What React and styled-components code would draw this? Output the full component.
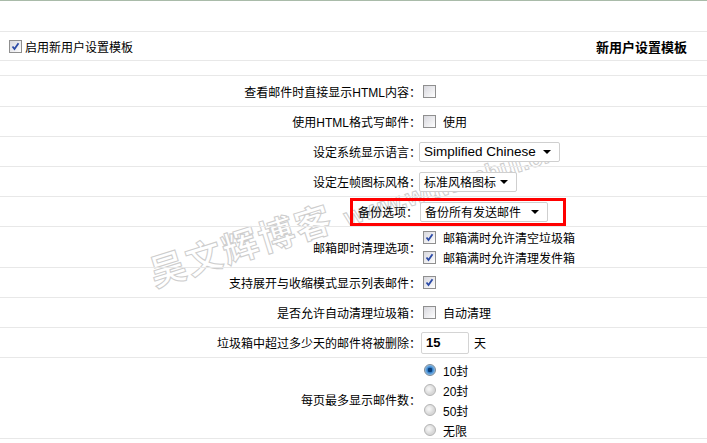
import React from "react";
import styled, { createGlobalStyle } from "styled-components";

const Global = createGlobalStyle`
  html, body { margin: 0; padding: 0; background: #fff; }
  body { font-family: "Liberation Sans", "Noto Sans CJK SC", sans-serif; font-size: 12px; color: #000; }
`;

const Page = styled.div`
  position: relative;
  width: 707px;
  height: 443px;
  overflow: hidden;
  border-top: 1px solid #a9bba9;
  box-sizing: border-box;
`;

const Form = styled.div`
  position: relative;
  z-index: 1;
  display: flex;
  flex-direction: column;
`;

const Blank = styled.div`
  height: ${(p) => p.$h}px;
  border-bottom: 1px solid #e8e8e8;
`;

const Header = styled.div`
  height: 28px;
  border-bottom: 1px solid #e8e8e8;
  display: flex;
  align-items: center;
  justify-content: space-between;
  padding: 0 20px 0 9px;
`;

const HeaderLeft = styled.label`
  display: flex;
  align-items: center;
  gap: 3px;
`;

const Title = styled.div`
  font-weight: bold;
  font-size: 13px;
`;

const Row = styled.div`
  height: ${(p) => p.$h || 29}px;
  border-bottom: 1px solid #e8e8e8;
  display: grid;
  grid-template-columns: 421px 1fr;
  align-items: center;
`;

const Label = styled.div`
  text-align: right;
  white-space: nowrap;
`;

const Value = styled.div`
  display: flex;
  flex-direction: ${(p) => (p.$col ? "column" : "row")};
  align-items: ${(p) => (p.$col ? "flex-start" : "center")};
  gap: ${(p) => p.$gap ?? 7}px;
  margin-left: ${(p) => p.$ml ?? 2}px;
  padding-top: ${(p) => p.$pt ?? 0}px;
`;

const Option = styled.div`
  display: flex;
  align-items: center;
  gap: 7px;
  height: 20px;
`;

const Box = styled.span`
  display: inline-flex;
  align-items: center;
  justify-content: center;
  width: 13px;
  height: 13px;
  box-sizing: border-box;
  border: 1px solid #8f8f8f;
  background: linear-gradient(135deg, #d8d8de 0%, #f2f2f4 70%, #ffffff 100%);
  flex: none;
`;

const Check = ({ checked }) => (
  <Box>
    {checked && (
      <svg width="9" height="9" viewBox="0 0 9 9">
        <path d="M1.5 4.5 L3.5 7 L7.5 1.2" fill="none" stroke="#2b4aa6" strokeWidth="1.8" />
      </svg>
    )}
  </Box>
);

const Radio = styled.span`
  width: 12px;
  height: 12px;
  border-radius: 50%;
  box-sizing: border-box;
  flex: none;
  border: 1px solid ${(p) => (p.$on ? "#7e8a96" : "#b4b4b4")};
  background: ${(p) =>
    p.$on
      ? "radial-gradient(circle at 50% 50%, #0b3e78 0 2px, #2f7cc8 2.5px, #8fc0ea 5px)"
      : "radial-gradient(circle at 40% 40%, #f4f4f4 0 1px, #d8d8d8 5px)"};
`;

const Select = styled.div`
  width: ${(p) => p.$w}px;
  height: 20px;
  box-sizing: border-box;
  border: 1px solid #cfcfcf;
  border-radius: 2px;
  background: #fff;
  display: flex;
  align-items: center;
  justify-content: space-between;
  padding: 0 8px 0 4px;
  font-size: ${(p) => p.$fs || 12}px;
  white-space: nowrap;
`;

const Arrow = styled.span`
  width: 0;
  height: 0;
  border-left: 4px solid transparent;
  border-right: 4px solid transparent;
  border-top: 4px solid #000;
`;

const Highlight = styled.div`
  display: flex;
  align-items: center;
  height: 28px;
  box-sizing: border-box;
  border: 3px solid #ff0000;
  margin-left: -71px;
  padding-left: 5px;
  width: 216px;
`;

const Input = styled.div`
  width: 48px;
  height: 22px;
  box-sizing: border-box;
  border: 1px solid #d4d4d4;
  border-radius: 2px;
  background: #fff;
  font-size: 13px;
  font-weight: bold;
  display: flex;
  align-items: center;
  padding-left: 4px;
`;

const Watermark = styled.div`
  position: absolute;
  z-index: 0;
  left: 142px;
  top: 246px;
  transform: rotate(-17.5deg);
  transform-origin: left top;
  white-space: nowrap;
  color: #fff;
  -webkit-text-stroke: 1px #cdcdcd;
  font-family: "Noto Sans CJK SC", sans-serif;
  font-weight: bold;
  font-size: 36px;
  letter-spacing: 2px;
`;

const Latin = styled.span`
  font-family: "Liberation Sans", sans-serif;
  font-weight: bold;
  font-size: 25px;
  letter-spacing: 0;
  margin-left: 12px;
`;

export default function App() {
  return (
    <>
      <Global />
      <Page>
        <Watermark>
          吴文辉博客<Latin>www.wuwenhui.cn</Latin>
        </Watermark>
        <Form>
          <Blank $h={30} />
          <Header>
            <HeaderLeft>
              <Check checked />
              启用新用户设置模板
            </HeaderLeft>
            <Title>新用户设置模板</Title>
          </Header>
          <Blank $h={14} />
          <Row $h={30}>
            <Label>查看邮件时直接显示HTML内容：</Label>
            <Value>
              <Check />
            </Value>
          </Row>
          <Row>
            <Label>使用HTML格式写邮件：</Label>
            <Value>
              <Check />
              使用
            </Value>
          </Row>
          <Row>
            <Label>设定系统显示语言：</Label>
            <Value $ml={-2}>
              <Select $w={141} $fs={13.5}>
                Simplified Chinese
                <Arrow />
              </Select>
            </Value>
          </Row>
          <Row>
            <Label>设定左帧图标风格：</Label>
            <Value $ml={-2}>
              <Select $w={98}>
                标准风格图标
                <Arrow />
              </Select>
            </Value>
          </Row>
          <Row>
            <Label />
            <Value $ml={0}>
              <Highlight>
                备份选项：
                <Select $w={128} style={{ marginLeft: 2 }}>
                  备份所有发送邮件
                  <Arrow />
                </Select>
              </Highlight>
            </Value>
          </Row>
          <Row $h={40}>
            <Label>邮箱即时清理选项：</Label>
            <Value $col $gap={0}>
              <Option>
                <Check checked />
                邮箱满时允许清空垃圾箱
              </Option>
              <Option>
                <Check checked />
                邮箱满时允许清理发件箱
              </Option>
            </Value>
          </Row>
          <Row>
            <Label>支持展开与收缩模式显示列表邮件：</Label>
            <Value>
              <Check checked />
            </Value>
          </Row>
          <Row>
            <Label>是否允许自动清理垃圾箱：</Label>
            <Value>
              <Check />
              自动清理
            </Value>
          </Row>
          <Row>
            <Label>垃圾箱中超过多少天的邮件将被删除：</Label>
            <Value $ml={0} $gap={5}>
              <Input>15</Input>
              天
            </Value>
          </Row>
          <Row $h={80}>
            <Label>每页最多显示邮件数：</Label>
            <Value $col $gap={0} $ml={3} $pt={2}>
              <Option>
                <Radio $on />
                10封
              </Option>
              <Option>
                <Radio />
                20封
              </Option>
              <Option>
                <Radio />
                50封
              </Option>
              <Option>
                <Radio />
                无限
              </Option>
            </Value>
          </Row>
        </Form>
      </Page>
    </>
  );
}
